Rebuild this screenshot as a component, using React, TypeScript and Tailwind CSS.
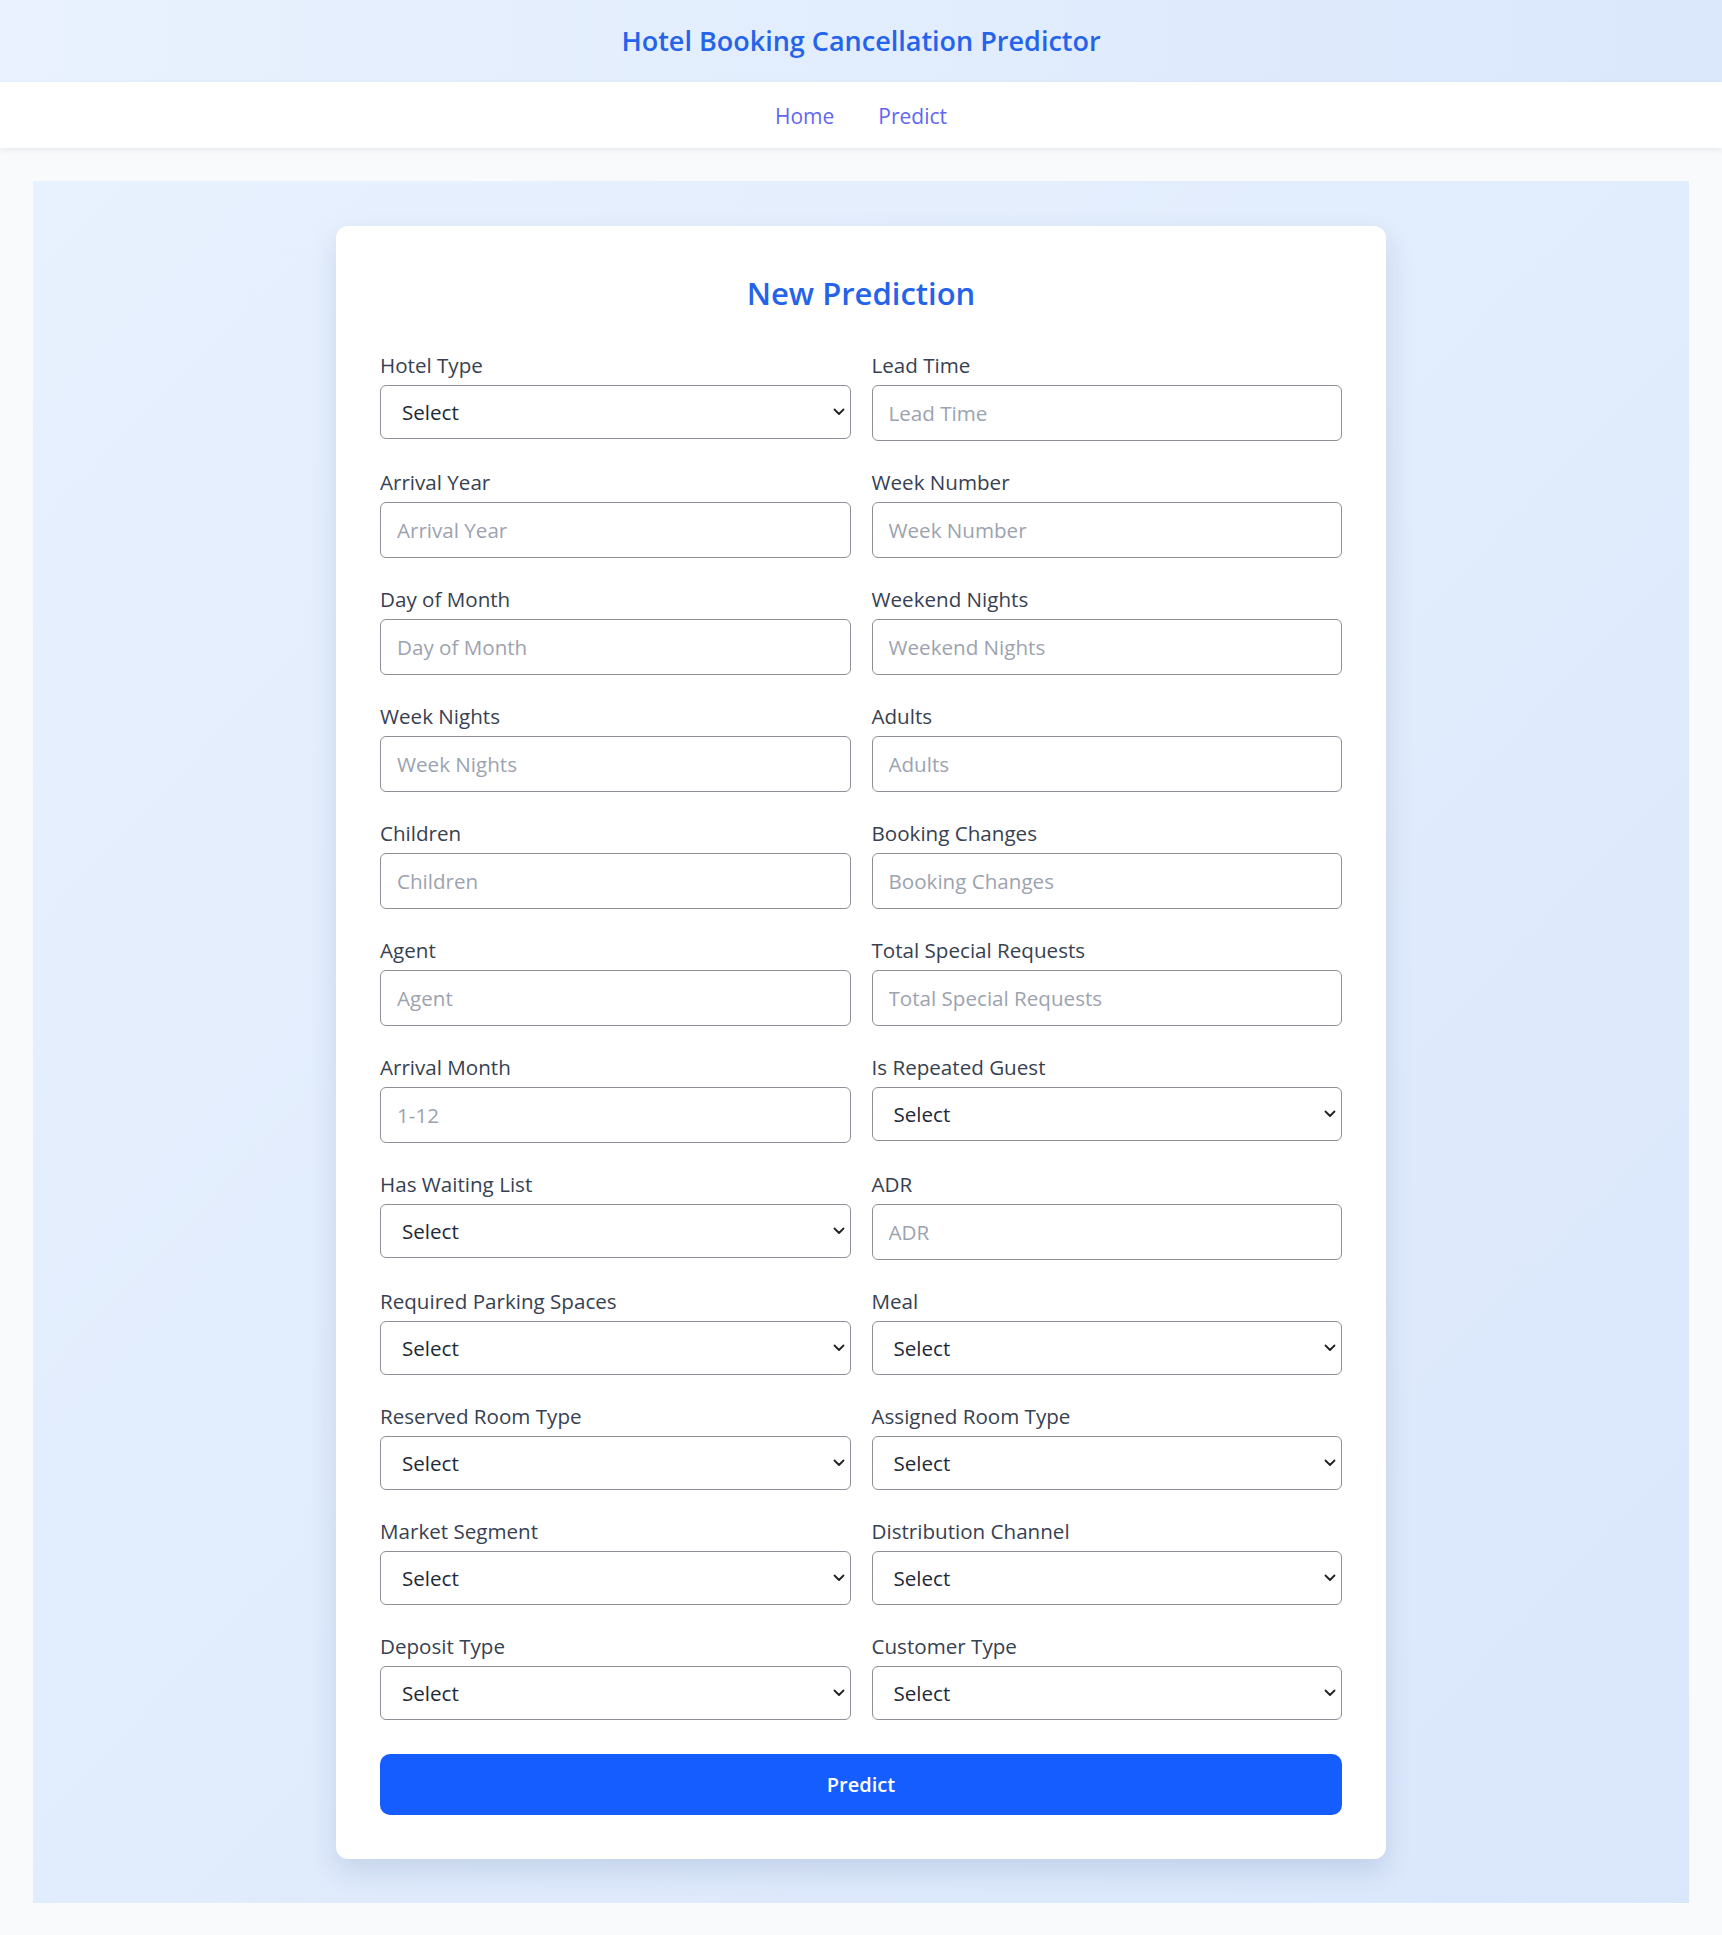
import React from 'react';

type Field = {
    label: string;
    kind: 'select' | 'input';
    placeholder?: string;
};

const fields: Field[] = [
    { label: 'Hotel Type', kind: 'select' },
    { label: 'Lead Time', kind: 'input', placeholder: 'Lead Time' },
    { label: 'Arrival Year', kind: 'input', placeholder: 'Arrival Year' },
    { label: 'Week Number', kind: 'input', placeholder: 'Week Number' },
    { label: 'Day of Month', kind: 'input', placeholder: 'Day of Month' },
    { label: 'Weekend Nights', kind: 'input', placeholder: 'Weekend Nights' },
    { label: 'Week Nights', kind: 'input', placeholder: 'Week Nights' },
    { label: 'Adults', kind: 'input', placeholder: 'Adults' },
    { label: 'Children', kind: 'input', placeholder: 'Children' },
    { label: 'Booking Changes', kind: 'input', placeholder: 'Booking Changes' },
    { label: 'Agent', kind: 'input', placeholder: 'Agent' },
    { label: 'Total Special Requests', kind: 'input', placeholder: 'Total Special Requests' },
    { label: 'Arrival Month', kind: 'input', placeholder: '1-12' },
    { label: 'Is Repeated Guest', kind: 'select' },
    { label: 'Has Waiting List', kind: 'select' },
    { label: 'ADR', kind: 'input', placeholder: 'ADR' },
    { label: 'Required Parking Spaces', kind: 'select' },
    { label: 'Meal', kind: 'select' },
    { label: 'Reserved Room Type', kind: 'select' },
    { label: 'Assigned Room Type', kind: 'select' },
    { label: 'Market Segment', kind: 'select' },
    { label: 'Distribution Channel', kind: 'select' },
    { label: 'Deposit Type', kind: 'select' },
    { label: 'Customer Type', kind: 'select' },
];

const Chevron = () => (
    <svg
        className="pointer-events-none absolute right-[6px] top-1/2 -translate-y-1/2"
        width="12"
        height="8"
        viewBox="0 0 12 8"
        fill="none"
    >
        <path d="M1.5 1.5 L6 6 L10.5 1.5" stroke="#222" strokeWidth="1.8" strokeLinecap="round" strokeLinejoin="round" />
    </svg>
);

const FormField = ({ field }: { field: Field }) => (
    <div className="flex flex-col">
        <label className="mb-[5px] text-[20.6px] leading-[30px] text-[#374151]">{field.label}</label>
        {field.kind === 'select' ? (
            <div className="relative">
                <select
                    defaultValue=""
                    className="h-[54px] w-full appearance-none rounded-[6px] border border-[#8d9096] bg-white pl-[21px] pr-8 text-[20.6px] text-[#1f2937] outline-none"
                >
                    <option value="">Select</option>
                </select>
                <Chevron />
            </div>
        ) : (
            <input
                type="text"
                placeholder={field.placeholder}
                className="h-[56px] w-full rounded-[6px] border border-[#8d9096] bg-white px-[16px] text-[20.6px] text-[#1f2937] outline-none placeholder:text-[#9ca3af]"
            />
        )}
    </div>
);

const App: React.FC = () => {
    return (
        <div className="min-h-screen bg-[#f8fafc] font-['Open_Sans',sans-serif]">
            <header className="flex h-[82px] items-center justify-center bg-gradient-to-r from-[#e9f2fe] to-[#dbe8fc]">
                <h1 className="text-[27px] font-semibold text-[#2563eb]">Hotel Booking Cancellation Predictor</h1>
            </header>
            <nav className="relative flex h-[66px] items-center justify-center gap-[44px] bg-white pt-[4px] shadow-[0_2px_6px_rgba(0,0,0,0.08)]">
                <a className="text-[21px] font-medium text-[#6366f1]">Home</a>
                <a className="text-[21px] font-medium text-[#6366f1]">Predict</a>
            </nav>
            <main className="px-[33px] pt-[33px] pb-[32px]">
                <div className="flex justify-center bg-gradient-to-br from-[#e8f1fe] to-[#dae7fb] pt-[45px] pb-[44px]">
                    <div className="w-[1050px] rounded-[12px] bg-white px-[44px] pt-[47px] pb-[44px] shadow-[0_12px_28px_rgba(30,64,120,0.14)]">
                        <h2 className="mb-[37px] text-center text-[31px] leading-[40px] font-semibold text-[#2563eb]">
                            New Prediction
                        </h2>
                        <div className="grid grid-cols-2 gap-x-[21px] gap-y-[26px]">
                            {fields.map((f) => (
                                <FormField key={f.label} field={f} />
                            ))}
                        </div>
                        <button className="mt-[34px] h-[61px] w-full rounded-[10px] bg-[#165dff] text-[20px] font-semibold text-white">
                            Predict
                        </button>
                    </div>
                </div>
            </main>
        </div>
    );
};

export default App;
